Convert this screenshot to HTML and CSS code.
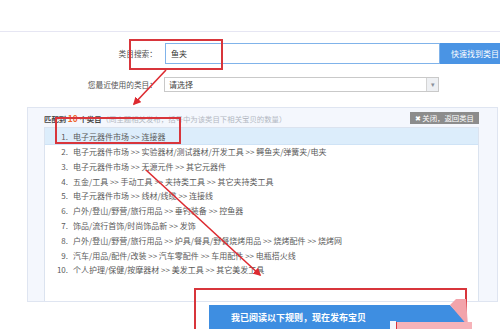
FILE: index.html
```html
<!DOCTYPE html>
<html lang="zh-CN">
<head>
    <meta charset="UTF-8">
    <title>选择类目</title>
    <link rel="stylesheet" href="styles.css">
</head>
<body>
    <div class="page">
        <div class="topbar"></div>

        <div class="search">
            <div class="row">
                <label class="row-label">类目搜索：</label>
                <div class="search-input">鱼夹</div>
                <button class="search-btn">快速找到类目</button>
            </div>
            <div class="row row-recent">
                <label class="row-label">您最近使用的类目：</label>
                <div class="select">
                    <span class="select-text">请选择</span>
                    <span class="select-arrow">▾</span>
                </div>
            </div>
        </div>

        <div class="match-panel">
            <div class="match-head">
                <p class="match-title"><b>匹配到 <em>10</em> 个类目</b><span class="muted">（同主题相关发布，括号中为该类目下相关宝贝的数量）</span></p>
                <span class="close-btn">✖ 关闭，返回类目</span>
            </div>
            <ul class="match-list">
                <li class="active"><span class="num">1.</span>电子元器件市场 &gt;&gt; 连接器</li>
                <li><span class="num">2.</span>电子元器件市场 &gt;&gt; 实验器材/测试器材/开发工具 &gt;&gt; 鳄鱼夹/弹簧夹/电夹</li>
                <li><span class="num">3.</span>电子元器件市场 &gt;&gt; 无源元件 &gt;&gt; 其它元器件</li>
                <li><span class="num">4.</span>五金/工具 &gt;&gt; 手动工具 &gt;&gt; 夹持类工具 &gt;&gt; 其它夹持类工具</li>
                <li><span class="num">5.</span>电子元器件市场 &gt;&gt; 线材/线缆 &gt;&gt; 连接线</li>
                <li><span class="num">6.</span>户外/登山/野营/旅行用品 &gt;&gt; 垂钓装备 &gt;&gt; 控鱼器</li>
                <li><span class="num">7.</span>饰品/流行首饰/时尚饰品新 &gt;&gt; 发饰</li>
                <li><span class="num">8.</span>户外/登山/野营/旅行用品 &gt;&gt; 炉具/餐具/野餐烧烤用品 &gt;&gt; 烧烤配件 &gt;&gt; 烧烤网</li>
                <li><span class="num">9.</span>汽车/用品/配件/改装 &gt;&gt; 汽车零配件 &gt;&gt; 车用配件 &gt;&gt; 电瓶搭火线</li>
                <li><span class="num">10.</span>个人护理/保健/按摩器材 &gt;&gt; 美发工具 &gt;&gt; 其它美发工具</li>
            </ul>
        </div>

        <div class="publish">
            <button class="publish-btn">我已阅读以下规则，现在发布宝贝</button>
        </div>

        <!-- red annotation marks drawn over the page -->
        <svg class="marks" width="500" height="329" viewBox="0 0 500 329">
            <defs>
                <marker id="head" markerWidth="5" markerHeight="5" refX="4" refY="2.5" orient="auto" markerUnits="strokeWidth">
                    <path d="M0,0 L5,2.5 L0,5 Z" fill="#dd2a30"/>
                </marker>
            </defs>
            <rect x="130" y="40" width="92" height="29" fill="none" stroke="#d8353b" stroke-width="2"/>
            <rect x="56" y="118" width="124" height="25" fill="none" stroke="#d8353b" stroke-width="2"/>
            <rect x="195" y="289" width="271" height="50" fill="none" stroke="#d8353b" stroke-width="2"/>
            <line x1="166" y1="70" x2="134" y2="104" stroke="#dd2a30" stroke-width="1.6" marker-end="url(#head)"/>
            <line x1="146" y1="170" x2="260" y2="275" stroke="#dd2a30" stroke-width="1.6" marker-end="url(#head)"/>
            <polygon points="450,305 456,299 466,299 468,326" fill="#f2a4ab"/>
            <rect x="390" y="321" width="6" height="8" fill="#f4f6fb"/>
            <rect x="396" y="322" width="76" height="7" fill="#f6b3b9"/>
            <line x1="396.5" y1="322" x2="396.5" y2="329" stroke="#d8353b" stroke-width="1"/>
        </svg>
    </div>
</body>
</html>
```

FILE: styles.css
```css
* {
    margin: 0;
    padding: 0;
    box-sizing: border-box;
}

body {
    font-family: "Noto Sans CJK SC", "Liberation Sans", sans-serif;
    font-size: 8px;
    color: #5a5a5a;
    background: #fff;
    overflow: hidden;
}

.page {
    position: relative;
    width: 500px;
    height: 329px;
    overflow: hidden;
}

.topbar {
    height: 32px;
    border-bottom: 1px solid #e6e6f3;
}

.search {
    margin-top: 11px;
}

.row {
    display: flex;
    align-items: center;
    height: 21px;
}

.row-recent {
    margin-top: 13px;
    height: 15px;
}

.row-label {
    width: 165px;
    padding-right: 8px;
    text-align: right;
    font-size: 7.7px;
    color: #555;
}

.search-input {
    width: 275px;
    height: 21px;
    border: 1px solid #80b3ea;
    padding-left: 5px;
    line-height: 19px;
    color: #333;
}

.search-btn {
    width: 60px;
    height: 21px;
    border: none;
    background: #4a94e4;
    color: #fff;
    font: inherit;
    text-align: left;
    padding-left: 11px;
    white-space: nowrap;
}

.select {
    display: flex;
    width: 275px;
    height: 15px;
    margin-left: -1px;
    border: 1px solid #c9c9c9;
}

.select-text {
    flex: 1;
    padding-left: 4px;
    line-height: 13px;
    color: #444;
}

.select-arrow {
    width: 12px;
    border-left: 1px solid #d4d4d4;
    background: #eef0f3;
    color: #8a8f99;
    font-size: 7px;
    line-height: 13px;
    text-align: center;
}

.match-panel {
    margin: 15px 0 0 27px;
    width: 471px;
    background: #f4f7fd;
    border: 1px solid #dfe5f1;
    padding: 0 18px 0 16px;
}

.match-head {
    display: flex;
    align-items: center;
    justify-content: space-between;
    height: 19px;
}

.match-title {
    font-size: 7.4px;
    white-space: nowrap;
    overflow: hidden;
}

.match-title b {
    color: #444;
}

.match-title em {
    font-style: normal;
    font-size: 8.4px;
    color: #f0642d;
}

.muted {
    color: #b3b8c2;
}

.close-btn {
    flex-shrink: 0;
    height: 12px;
    padding: 0 5px;
    background: #8c8c8c;
    color: #fff;
    font-size: 7.4px;
    line-height: 12px;
}

.match-list {
    list-style: none;
    height: 174px;
    background: #fff;
    border: 1px solid #dbe3ef;
    border-bottom: none;
}

.match-list li {
    height: 14.8px;
    line-height: 14.8px;
    white-space: nowrap;
}

.match-list li.active {
    height: 17px;
    line-height: 17px;
    background: #dcedfb;
    border-bottom: 1px solid #cfe3f6;
}

.num {
    display: inline-block;
    width: 23px;
    margin-right: 5px;
    text-align: right;
}

.publish {
    padding: 3px 0 0 209px;
}

.publish-btn {
    width: 257px;
    height: 30px;
    border: none;
    background: #3e8ee1;
    color: #fff;
    font: bold 9px "Noto Sans CJK SC", sans-serif;
    text-align: left;
    padding: 0 0 6px 22px;
    clip-path: polygon(0 0, 241px 0, 100% 55%, 100% 100%, 0 100%);
}

.marks {
    position: absolute;
    top: 0;
    left: 0;
    pointer-events: none;
}
```
